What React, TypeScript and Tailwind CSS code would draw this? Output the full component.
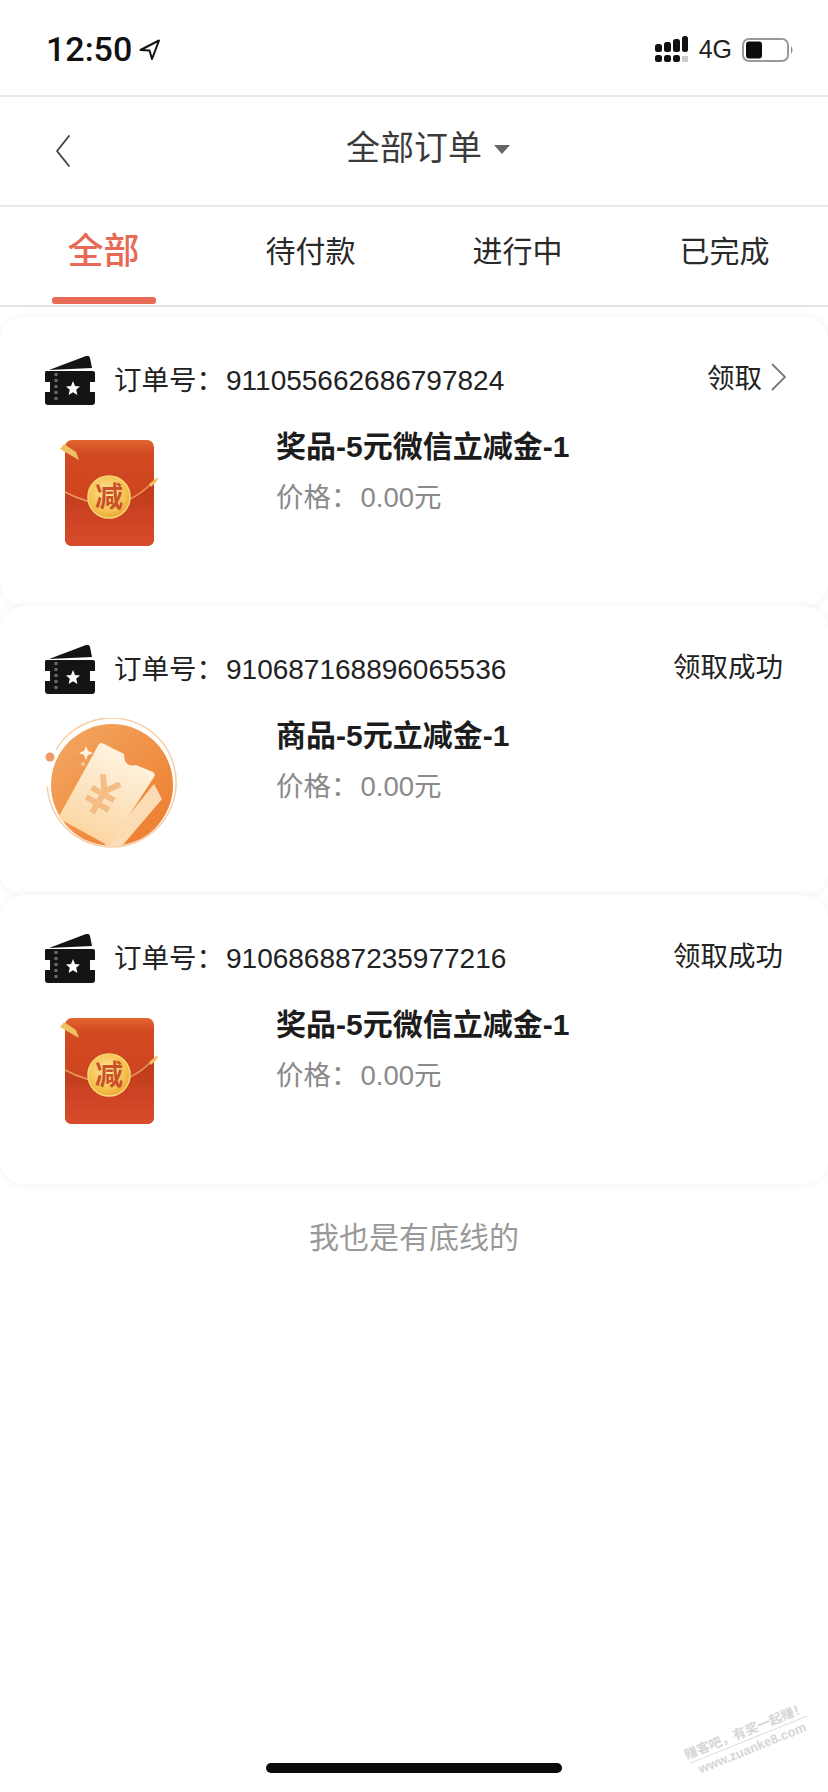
import { ChevronLeft } from "lucide-react";

const font = "font-['Liberation_Sans','Noto_Sans_CJK_SC',sans-serif]";

const tabs = ["全部", "待付款", "进行中", "已完成"];

const orders = [
  { no: "911055662686797824", status: "领取", name: "奖品-5元微信立减金-1", kind: "packet" },
  { no: "910687168896065536", status: "领取成功", name: "商品-5元立减金-1", kind: "coupon" },
  { no: "910686887235977216", status: "领取成功", name: "奖品-5元微信立减金-1", kind: "packet" },
];

function TicketIcon() {
  return (
    <svg width="52" height="50" viewBox="0 0 52 50" className="-ml-[1px] -mr-[1px] shrink-0">
      <path d="M5 14 L42 0 Q45 -1 46 2 L48 12 Z" fill="#141414" />
      <path
        d="M2 15 H49 Q51 15 51 17 V26 H46 V36 H51 V46 Q51 49 48 49 H4 Q1 49 1 46 V36 H6 V26 H1 V17 Q1 15 2 15 Z"
        fill="#141414"
      />
      <path d="M12 17 V47" stroke="#6e6e6e" strokeWidth="3" strokeDasharray="3 3" />
      <path d="M29 25 L31 30 L36 30.500 L32.200 33.800 L33.400 39 L29 36.300 L24.600 39 L25.800 33.800 L22 30.500 L27 30 Z" fill="#fff" />
    </svg>
  );
}

function RedPacket() {
  return (
    <svg width="100" height="118" viewBox="0 0 100 118">
      <defs>
        <linearGradient id="packetTop" x1="0" y1="0" x2="0" y2="1">
          <stop offset="0" stopColor="#e2652f" />
          <stop offset="0.120" stopColor="#d24a22" />
          <stop offset="1" stopColor="#c93f1d" />
        </linearGradient>
        <linearGradient id="packetBottom" x1="0" y1="0" x2="0" y2="1">
          <stop offset="0" stopColor="#bd3a1b" />
          <stop offset="1" stopColor="#d94c2b" />
        </linearGradient>
        <radialGradient id="coin" cx="0.450" cy="0.400" r="0.650">
          <stop offset="0" stopColor="#fde79c" />
          <stop offset="0.700" stopColor="#f5bf4c" />
          <stop offset="1" stopColor="#e79e2e" />
        </radialGradient>
      </defs>
      <rect x="6" y="2" width="89" height="106" rx="7" fill="url(#packetTop)" />
      <path d="M6 54 Q28 66 50 66 Q72 66 93 45 L95 47 V101 Q95 108 88 108 H13 Q6 108 6 101 Z" fill="url(#packetBottom)" />
      <path d="M6 54 Q28 66 50 66 Q72 66 93 45" stroke="#e99a5a" strokeWidth="1.500" fill="none" />
      <circle cx="50" cy="59" r="21" fill="url(#coin)" stroke="#f8d777" strokeWidth="1.500" />
      <text x="50" y="69" textAnchor="middle" fontSize="28" fontWeight="700" fill="#c9502a" fontFamily="'Noto Sans CJK SC', sans-serif">
        减
      </text>
      <path d="M1 11 L5 6 L17 14 L20 22 Z" fill="#efc062" />
      <path d="M90 46 L99 39 L98 43 L92 49 Z" fill="#efc062" />
    </svg>
  );
}

function CouponBadge() {
  return (
    <svg width="134" height="134" viewBox="0 0 134 134">
      <defs>
        <linearGradient id="disc" x1="0" y1="0" x2="1" y2="1">
          <stop offset="0" stopColor="#f3a964" />
          <stop offset="1" stopColor="#ed7a2c" />
        </linearGradient>
        <linearGradient id="ticket" x1="0.700" y1="0" x2="0.300" y2="1">
          <stop offset="0" stopColor="#fff6e6" />
          <stop offset="1" stopColor="#fbd39d" />
        </linearGradient>
        <clipPath id="discClip">
          <circle cx="68" cy="67" r="62" />
        </clipPath>
      </defs>
      <path d="M6 44 A64.500 64.500 0 1 1 5 82" fill="none" stroke="#f6cfa8" strokeWidth="1.500" transform="rotate(12 68 67)" />
      <circle cx="68" cy="67" r="61" fill="url(#disc)" />
      <circle cx="6" cy="39" r="4.500" fill="#ee9b66" />
      <g clipPath="url(#discClip)">
        <path d="M110 66 L118 81 L78 128 H60 Z" fill="#fbdcb4" />
        <path
          d="M55 26 Q57 24 60 26 L80 36 Q80 50 92 47 L109 54 Q112 56 110 59 L65 128 L14 100 Z"
          fill="url(#ticket)"
        />
      </g>
      <path
        d="M49 59 L59 73 L69 59 M46 76 H72 M46 87 H72 M59 73 V98"
        stroke="#f4bd85"
        strokeWidth="6"
        fill="none"
        transform="rotate(30 59 76)"
      />
      <path d="M42 28 L44 33 L49 35 L44 37 L42 42 L40 37 L35 35 L40 33 Z" fill="#fff3e2" />
      <circle cx="39" cy="46" r="2" fill="#f8c99a" />
    </svg>
  );
}

function OrderCard({ order }: { order: (typeof orders)[number] }) {
  return (
    <div className="h-[289px] rounded-[24px] bg-white px-[45px] pt-[38px] shadow-[0_0_10px_rgba(0,0,0,0.06)]">
      <div className="flex h-[52px] items-center">
        <TicketIcon />
        <span className="ml-[19px] text-[27.500px] text-[#222]">订单号：</span>
        <span className="ml-[2px] text-[28px] text-[#222]">{order.no}</span>
        <div className="ml-auto flex items-center pb-[4px] text-[27.500px] text-[#222]">
          {order.status}
          {order.status === "领取" && (
            <svg width="15" height="28" viewBox="0 0 15 28" className="-mr-[3px] mb-[4px] ml-[9px]" fill="none" stroke="#777" strokeWidth="1.800">
              <path d="M1 1 L14 14 L1 27" />
            </svg>
          )}
        </div>
      </div>
      <div className="mt-[6px] flex">
        <div className={order.kind === "packet" ? "ml-[14px] mt-[25px] w-[217px]" : "-ml-[1px] mt-[16px] w-[232px]"}>
          {order.kind === "packet" ? <RedPacket /> : <CouponBadge />}
        </div>
        <div className="flex flex-col">
          <span className="mt-[14px] text-[30px] leading-[40px] font-bold text-[#1c1c1c]">{order.name}</span>
          <span className="mt-[11px] text-[27.500px] leading-[40px] text-[#8a8a8a]">
            价格：<span className="ml-[2px]">0.00元</span>
          </span>
        </div>
      </div>
    </div>
  );
}

export default function App() {
  return (
    <div className={`relative flex h-[1792px] w-[828px] flex-col overflow-hidden bg-white ${font}`}>
      <div className="flex h-[97px] items-center border-b-2 border-[#e8e8e8] pl-[46px] pr-[33px] pt-[4px]">
        <span className="font-['Roboto'] text-[34px] font-medium text-[#111]">12:50</span>
        <svg width="22" height="22" viewBox="0 0 22 22" className="ml-[7px]" fill="none" stroke="#111" strokeWidth="2">
          <path d="M1.500 11 L20 1.500 L13 20 L10.500 11.500 Z" strokeLinejoin="round" />
        </svg>
        <svg width="34" height="27" viewBox="0 0 34 27" className="ml-auto">
          <rect x="0" y="8" width="7" height="8" rx="2.500" fill="#111" />
          <rect x="0" y="19" width="7" height="7" rx="2.500" fill="#111" />
          <rect x="9" y="6" width="7" height="10" rx="2.500" fill="#111" />
          <rect x="9" y="19" width="7" height="7" rx="2.500" fill="#111" />
          <rect x="18" y="3" width="7" height="13" rx="2.500" fill="#111" />
          <rect x="18" y="19" width="7" height="7" rx="2.500" fill="#111" />
          <rect x="27" y="0" width="6" height="16" rx="2.500" fill="#111" />
          <rect x="27" y="20" width="6" height="6" fill="#ccc" />
        </svg>
        <span className="ml-[10px] text-[25px] text-[#222]">4G</span>
        <svg width="54" height="26" viewBox="0 0 54 26" className="ml-[9px]">
          <rect x="2" y="2" width="45" height="22" rx="6" fill="none" stroke="#999" strokeWidth="2" />
          <rect x="5" y="4.500" width="16" height="17" rx="3" fill="#0c0c0c" />
          <path d="M50 9 Q53 13 50 17 Z" fill="#888" />
        </svg>
      </div>

      <div className="relative flex h-[110px] items-center justify-center border-b-2 border-[#e8e8e8] pb-[6px] pl-[28px]">
        <ChevronLeft className="absolute left-[33px] top-[24px] h-[60px] w-[60px] scale-x-[0.8] text-[#444]" strokeWidth={0.8} />
        <span className="text-[34px] text-[#3a3a3a]">全部订单</span>
        <span className="ml-[12px] mt-[2px] h-0 w-0 border-x-[8px] border-t-[9px] border-x-transparent border-t-[#666]" />
      </div>

      <div className="flex h-[100px] border-b-2 border-[#e4e4e4]">
        {tabs.map((tab, i) => (
          <div key={tab} className="relative flex w-[207px] items-center justify-center pb-[9px]">
            <span className={i === 0 ? "text-[36px] font-medium text-[#e66a55]" : "text-[30px] text-[#2a2a2a]"}>
              {tab}
            </span>
            {i === 0 && <div className="absolute bottom-[1px] left-[52px] h-[7px] w-[104px] rounded-[3px] bg-[#e66a55]" />}
          </div>
        ))}
      </div>

      <div className="mt-[10px] flex flex-col">
        {orders.map((order) => (
          <OrderCard key={order.no} order={order} />
        ))}
      </div>

      <p className="mt-[34px] text-center text-[30px] leading-[40px] text-[#999]">我也是有底线的</p>

      <div className="absolute bottom-[19px] left-[266px] h-[10px] w-[296px] rounded-full bg-[#0a0a0a]" />

      {/* site watermark */}
      <div className="absolute left-[684px] top-[1722px] -rotate-[22deg] text-center text-[13px] leading-[18px] font-bold whitespace-nowrap text-[#d6d6d6]">
        赚客吧，有奖一起赚！
        <br />
        www.zuanke8.com
        <div className="absolute left-[2px] right-[2px] top-[17px] h-px bg-[#dddddd]" />
      </div>
    </div>
  );
}
